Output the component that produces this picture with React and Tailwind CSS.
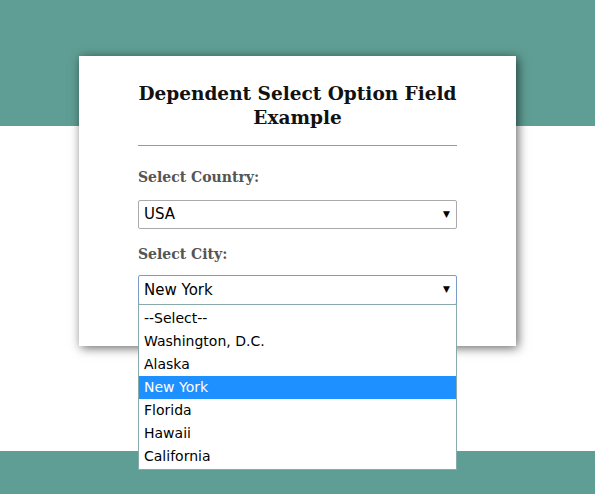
import React from "react";

const cities = ["--Select--", "Washington, D.C.", "Alaska", "New York", "Florida", "Hawaii", "California"];

export default function App() {
  return (
    <div className="h-[494px] w-full overflow-hidden bg-[linear-gradient(to_bottom,#5f9e94_0px,#5f9e94_126px,#ffffff_126px,#ffffff_451px,#5f9e94_451px)] pt-[56px] pl-[79px]">
      <div className="relative w-[437px] h-[290px] bg-white shadow-[2px_2px_10px_rgba(0,0,0,0.6)] px-[59px] pt-[26px]">
        <h1 className="-mx-[10px] text-center font-['DejaVu_Serif',serif] font-bold text-[18.5px] leading-[24px] text-[#111]">
          Dependent Select Option Field Example
        </h1>
        <div className="mt-[15px] h-px bg-[#999]" />
        <label className="block mt-[22px] font-['DejaVu_Serif',serif] font-bold text-[14px] leading-[18px] text-[#555]">
          Select Country:
        </label>
        <div className="mt-[14px] h-[29px] border border-[#aaa] rounded-[2px] flex items-center justify-between px-[5px] font-['Comic_Sans_MS','DejaVu_Sans',sans-serif] text-[15px] text-black">
          <span>USA</span>
          <span className="text-[9px] pr-[1px]">▼</span>
        </div>
        <label className="block mt-[16px] font-['DejaVu_Serif',serif] font-bold text-[14px] leading-[18px] text-[#555]">
          Select City:
        </label>
        <div className="relative mt-[12px]">
          <div className="h-[30px] border border-[#7a9cc6] rounded-[2px] flex items-center justify-between px-[5px] font-['Comic_Sans_MS','DejaVu_Sans',sans-serif] text-[15px] text-black">
            <span>New York</span>
            <span className="text-[9px] pr-[1px]">▼</span>
          </div>
          <ul className="absolute left-0 top-[29px] w-full bg-white border border-[#8aa] pt-[2px] pb-[1px] font-['Comic_Sans_MS','DejaVu_Sans',sans-serif] text-[14px]">
            {cities.map((c) => (
              <li
                key={c}
                className={
                  c === "New York"
                    ? "h-[23px] leading-[23px] px-[5px] bg-[#1e90ff] text-white"
                    : "h-[23px] leading-[23px] px-[5px] text-black"
                }
              >
                {c}
              </li>
            ))}
          </ul>
        </div>
      </div>
    </div>
  );
}
